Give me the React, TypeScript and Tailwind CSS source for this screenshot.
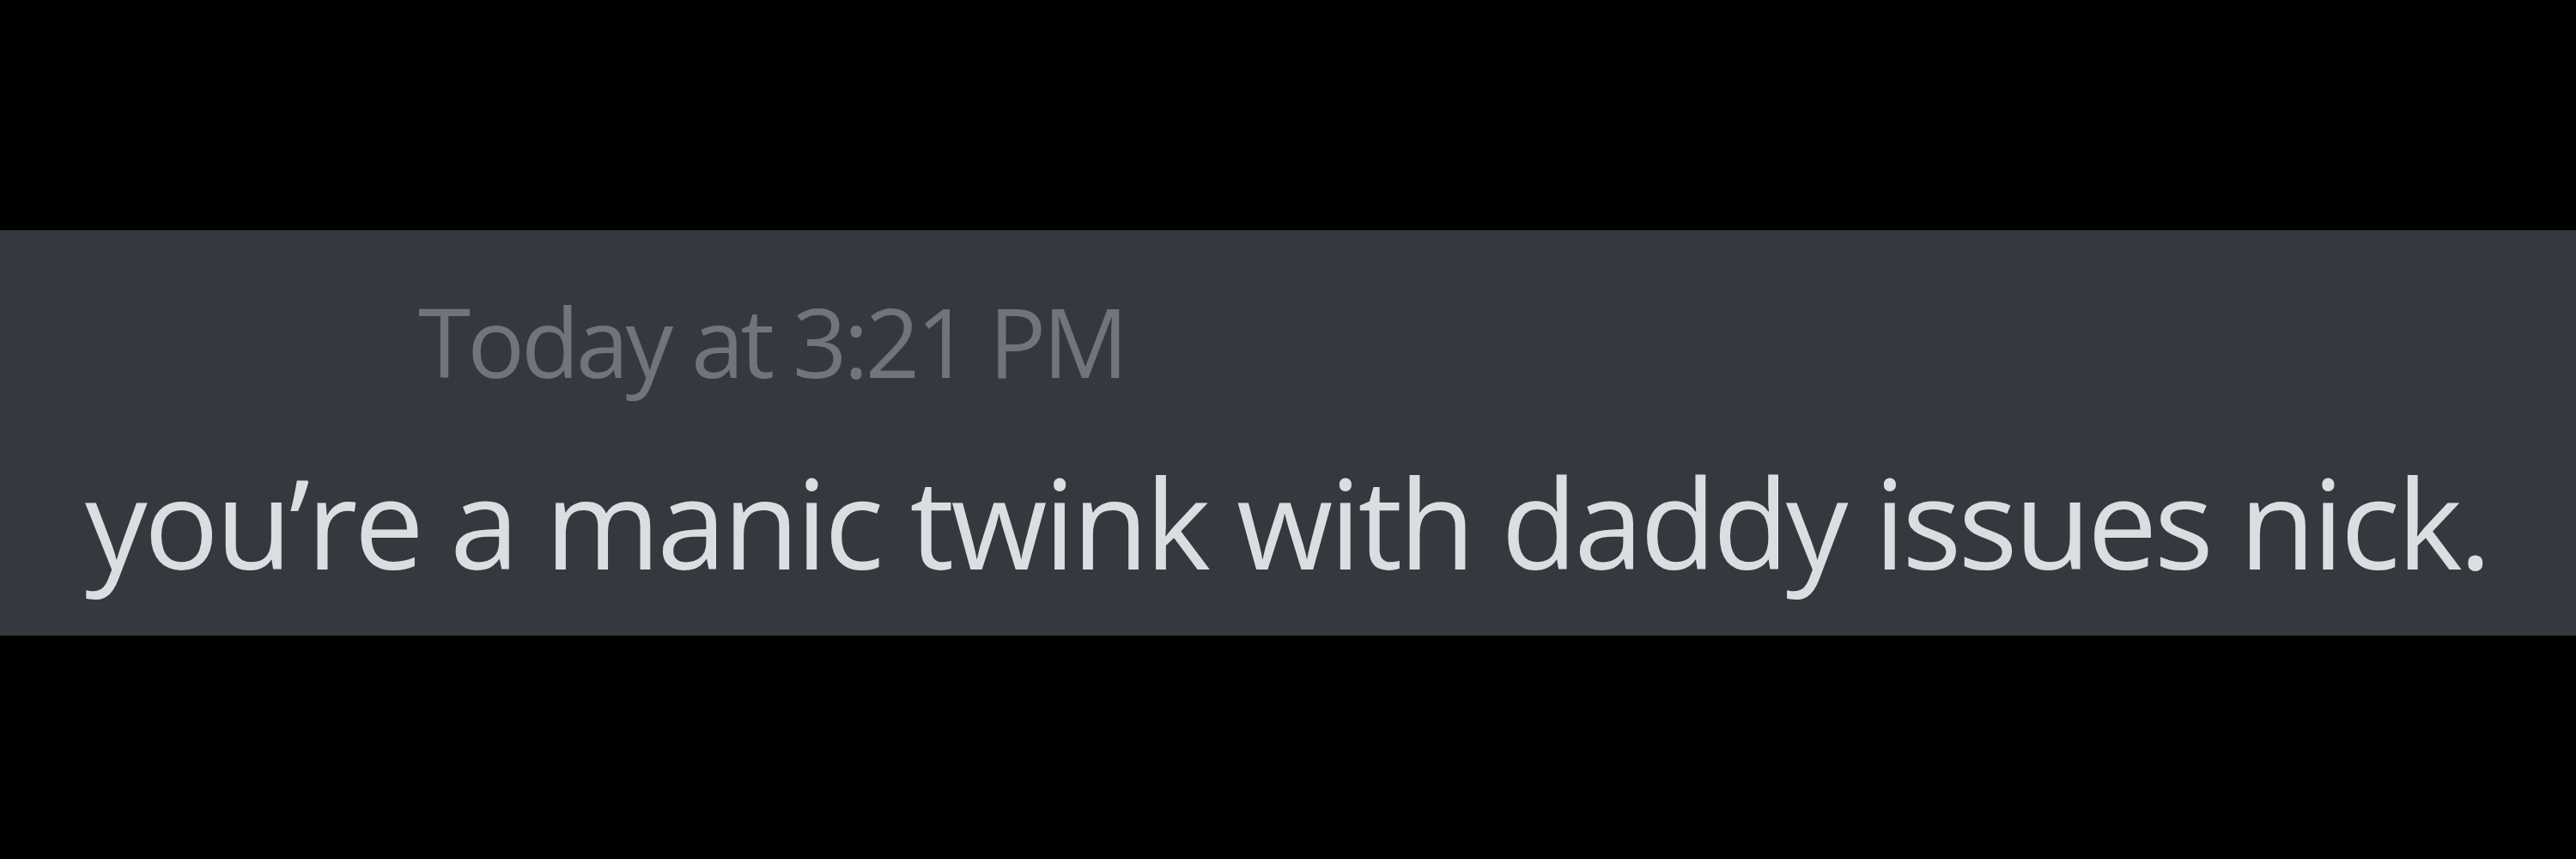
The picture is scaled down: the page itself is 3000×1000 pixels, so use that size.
import React from "react";

const font = { fontFamily: '"Open Sans", "Noto Sans", sans-serif' };

const App = () => {
  return (
    <div className="h-[1000px] w-[3000px] bg-black pt-[268px]" style={font}>
      <div className="flex h-[472px] w-full flex-col bg-[#36383f]">
        <p className="ml-[487px] mt-[74px] text-[111px] leading-none tracking-[-4px] text-[#70747b]">
          Today at 3:21 PM
        </p>
        <p className="ml-[99px] mt-[81px] text-[145px] leading-none tracking-[-3.8px] text-[#dcdde0]">
          you’re a manic twink with daddy issues nick.
        </p>
      </div>
    </div>
  );
};

export default App;
